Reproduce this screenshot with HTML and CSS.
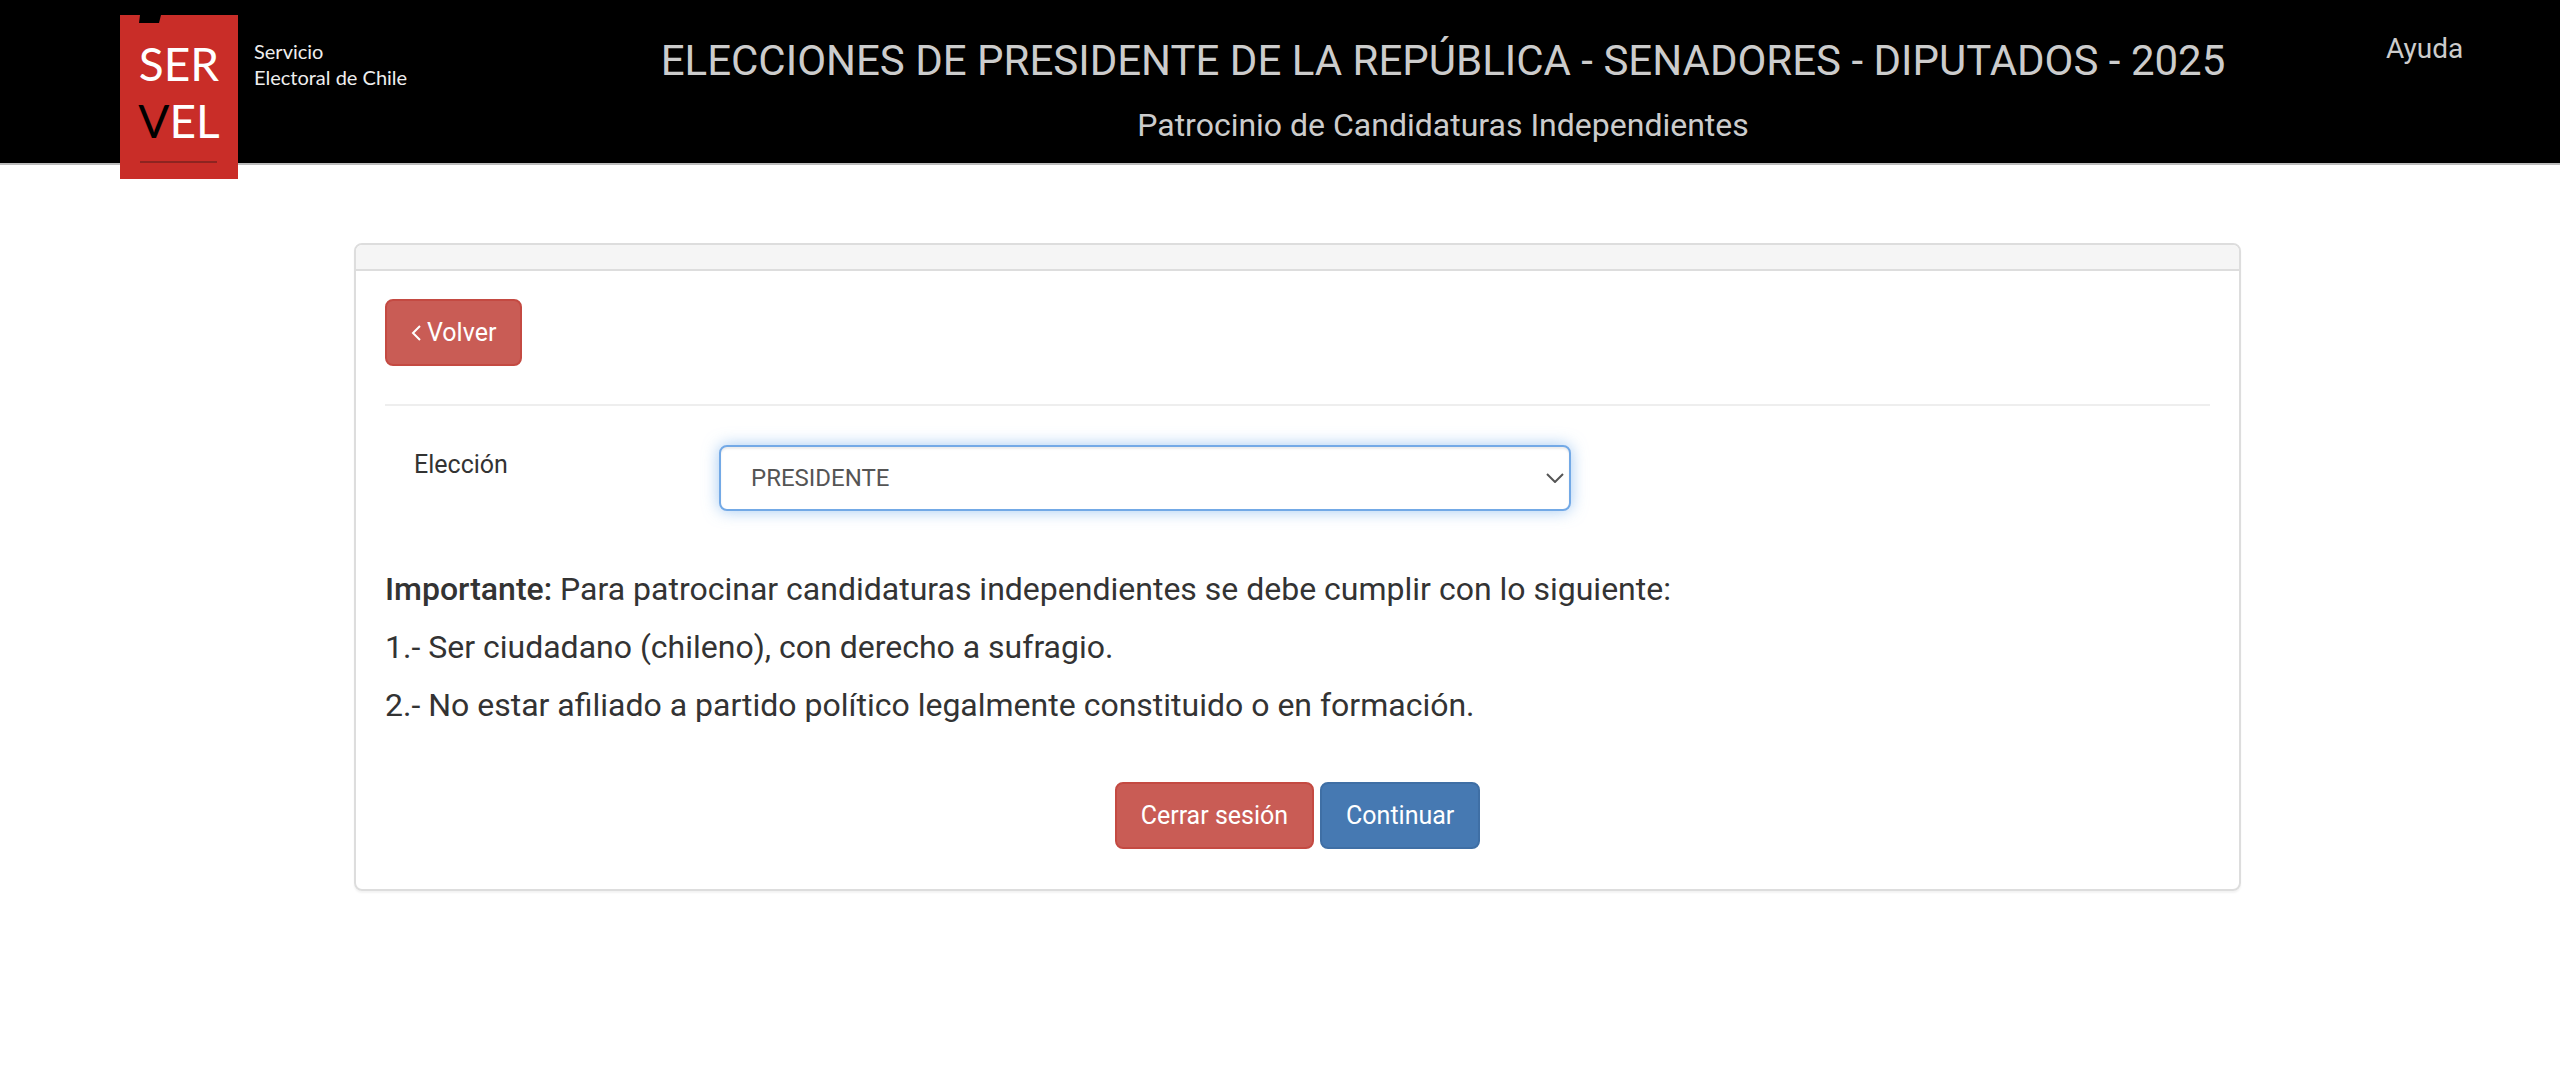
FILE: index.html
```html
<!DOCTYPE html>
<html lang="es">
<head>
    <meta charset="UTF-8">
    <meta name="viewport" content="width=device-width, initial-scale=1.0">
    <title>Patrocinio de Candidaturas Independientes</title>
    <link rel="stylesheet" href="styles.css">
</head>
<body>
    <header class="header">
        <div class="brand">
            <svg class="logo" width="118" height="164" viewBox="0 0 118 164" role="img" aria-label="SERVEL">
                <rect width="118" height="164" fill="#c92d28"/>
                <path d="M20 0H41L39 8H19Z" fill="#000"/>
                <text class="logo-text" x="59" y="66">SER</text>
                <text class="logo-text" x="59" y="123"><tspan class="logo-v">V</tspan>EL</text>
                <rect x="20" y="146" width="77" height="2" fill="#8e2420"/>
            </svg>
            <p class="brand-name">Servicio<br>Electoral de Chile</p>
        </div>
        <div class="titles">
            <h1>ELECCIONES DE PRESIDENTE DE LA REPÚBLICA - SENADORES - DIPUTADOS - 2025</h1>
            <h2>Patrocinio de Candidaturas Independientes</h2>
        </div>
        <nav class="help">
            <a href="#">Ayuda</a>
        </nav>
    </header>

    <main class="content">
        <section class="panel">
            <div class="panel-heading"></div>
            <form class="panel-body">
                <button type="button" class="btn btn-danger btn-back">
                    <svg width="10" height="18" viewBox="0 0 10 18" fill="none" stroke="#fff" stroke-width="2"><path d="M9 2L2 9L9 16"/></svg>
                    Volver
                </button>
                <hr>
                <div class="form-row">
                    <label for="eleccion">Elección</label>
                    <div class="select-wrap">
                        <select id="eleccion" class="form-control">
                            <option>PRESIDENTE</option>
                        </select>
                        <svg class="arrow" width="18" height="10" viewBox="0 0 18 10" fill="none" stroke="#555" stroke-width="2"><path d="M1 1L9 9L17 1"/></svg>
                    </div>
                </div>
                <div class="notes">
                    <p><strong>Importante:</strong> Para patrocinar candidaturas independientes se debe cumplir con lo siguiente:</p>
                    <p>1.- Ser ciudadano (chileno), con derecho a sufragio.</p>
                    <p>2.- No estar afiliado a partido político legalmente constituido o en formación.</p>
                </div>
                <div class="actions">
                    <button type="button" class="btn btn-danger">Cerrar sesión</button>
                    <button type="button" class="btn btn-primary">Continuar</button>
                </div>
            </form>
        </section>
    </main>
</body>
</html>
```
FILE: styles.css
```css
* {
    box-sizing: border-box;
}

body {
    margin: 0;
    font-family: Roboto, 'Noto Sans', sans-serif;
    font-size: 25px;
    color: #333;
    background-color: #fff;
}

h1, h2, p {
    margin: 0;
    font-weight: 400;
}

/* Header */
.header {
    display: grid;
    grid-template-columns: 526px 1fr 200px;
    height: 165px;
    background-color: #000;
    border-bottom: 2px solid #bbb;
    color: #ccc;
}

.brand {
    display: flex;
    align-items: flex-start;
    gap: 16px;
    padding: 15px 0 0 120px;
}

/* the logo hangs over the bottom edge of the bar */
.logo {
    flex: none;
    position: relative;
}

.logo-text {
    font-family: Lato, sans-serif;
    font-size: 46px;
    fill: #fff;
    text-anchor: middle;
}

.logo-v {
    fill: #000;
}

.brand-name {
    padding-top: 23px;
    font-family: Lato, sans-serif;
    font-size: 20px;
    line-height: 26px;
    color: #eee;
}

.titles {
    padding-top: 31px;
    text-align: center;
}

.titles h1 {
    font-size: 42px;
    line-height: 60px;
}

.titles h2 {
    padding-top: 12px;
    font-size: 32px;
    line-height: 44px;
}

.help {
    padding: 29px 0 0 26px;
    font-size: 28px;
    line-height: 40px;
}

.help a {
    color: #ccc;
    text-decoration: none;
}

/* Panel */
.content {
    padding: 78px 319px 40px 354px;
}

.panel {
    border: 2px solid #ddd;
    border-radius: 8px;
    box-shadow: 0 2px 2px rgba(0, 0, 0, 0.05);
    overflow: hidden;
}

.panel-heading {
    height: 26px;
    background-color: #f5f5f5;
    border-bottom: 2px solid #ddd;
}

.panel-body {
    padding: 28px 29px 40px;
}

hr {
    margin: 38px 0 39px;
    border: 0;
    border-top: 2px solid #eee;
}

.btn {
    height: 67px;
    padding: 0 24px;
    border: 2px solid;
    border-radius: 8px;
    font-family: inherit;
    font-size: 25px;
    color: #fff;
    cursor: pointer;
}

.btn-danger {
    background-color: #c95c55;
    border-color: #c44a42;
}

.btn-primary {
    background-color: #4679b2;
    border-color: #3f6fa5;
}

.btn-back {
    display: flex;
    align-items: center;
    gap: 6px;
}

.form-row {
    display: grid;
    grid-template-columns: 305px 4fr 3fr;
    padding-left: 29px;
}

.form-row label {
    line-height: 40px;
}

.select-wrap {
    position: relative;
}

.form-control {
    display: block;
    width: 100%;
    height: 66px;
    padding: 0 30px;
    appearance: none;
    background-color: #fff;
    border: 2px solid #73a9e6;
    border-radius: 8px;
    box-shadow: inset 0 2px 2px rgba(0, 0, 0, 0.08), 0 0 16px rgba(102, 165, 233, 0.6);
    font-family: inherit;
    font-size: 24px;
    color: #555;
    outline: none;
}

.arrow {
    position: absolute;
    top: 28px;
    right: 7px;
    pointer-events: none;
}

.notes {
    padding-top: 49px;
    font-size: 32px;
    line-height: 58px;
}

.notes strong {
    font-weight: 500;
}

.actions {
    display: flex;
    justify-content: center;
    gap: 6px;
    padding-top: 48px;
}
```
